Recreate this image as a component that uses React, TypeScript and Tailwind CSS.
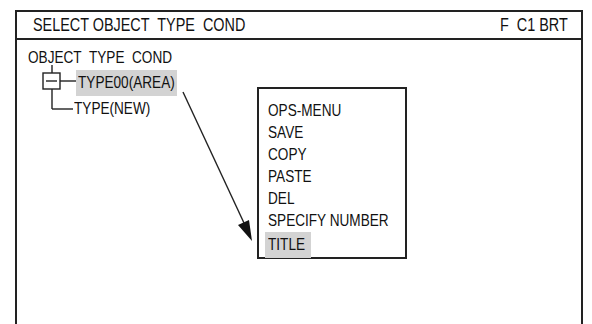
function T({ children, right }: { children: React.ReactNode; right?: boolean }) {
  return (
    <span
      className={
        "inline-block whitespace-nowrap scale-x-[0.8] " + (right ? "origin-right" : "origin-left")
      }
    >
      {children}
    </span>
  );
}

export default function App() {
  const items = ["OPS-MENU", "SAVE", "COPY", "PASTE", "DEL", "SPECIFY NUMBER"];
  return (
    <div
      className="w-[592px] h-[324px] bg-white overflow-hidden text-[#111] text-[17px] leading-[20px]"
      style={{ fontFamily: '"Liberation Sans", Arial, sans-serif' }}
    >
      <div className="ml-[15px] mt-[10px] w-[568px] h-[320px] border-2 border-b-0 border-[#222] flex flex-col">
        <div className="h-[28px] border-b-2 border-[#222] flex items-center justify-between pl-[16px] pr-[13px] text-[18px]">
          <T>SELECT OBJECT&nbsp; TYPE&nbsp; COND</T>
          <T right>F&nbsp; C1 BRT</T>
        </div>
        <div className="relative flex-1">
          <div className="pl-[11px] pt-[8px]">
            <T>OBJECT&nbsp; TYPE&nbsp; COND</T>
          </div>
          <div className="mt-[2px] pl-[59px] flex">
            <span className="w-[101px] h-[26px] leading-[26px] bg-[#d3d3d3] pl-[2px]">
              <T>TYPE00(AREA)</T>
            </span>
          </div>
          <div className="mt-[3px] pl-[57px]">
            <T>TYPE(NEW)</T>
          </div>

          <svg className="absolute left-0 top-0" width="560" height="240">
            <g stroke="#222" strokeWidth="1.4" fill="none">
              <line x1="35" y1="25" x2="35" y2="33" />
              <rect x="26" y="33" width="17" height="16" />
              <line x1="29" y1="41" x2="40" y2="41" />
              <line x1="43" y1="41" x2="59" y2="41" />
              <line x1="35" y1="49" x2="35" y2="69" />
              <line x1="35" y1="69" x2="56" y2="69" />
              <line x1="166" y1="52" x2="227" y2="183" />
            </g>
            <polygon points="235,201 232,180 221,185" fill="#111" />
          </svg>

          <div className="absolute left-[240px] top-[47px] w-[150px] h-[172px] border-2 border-[#222] bg-white pl-[6px] pt-[11px] text-[17px]">
            {items.map((t) => (
              <div key={t} className="pl-[3px] h-[22px] leading-[22px]">
                <T>{t}</T>
              </div>
            ))}
            <div className="w-[46px] h-[26px] leading-[26px] bg-[#d3d3d3] pl-[3px]">
              <T>TITLE</T>
            </div>
          </div>
        </div>
      </div>
    </div>
  );
}
